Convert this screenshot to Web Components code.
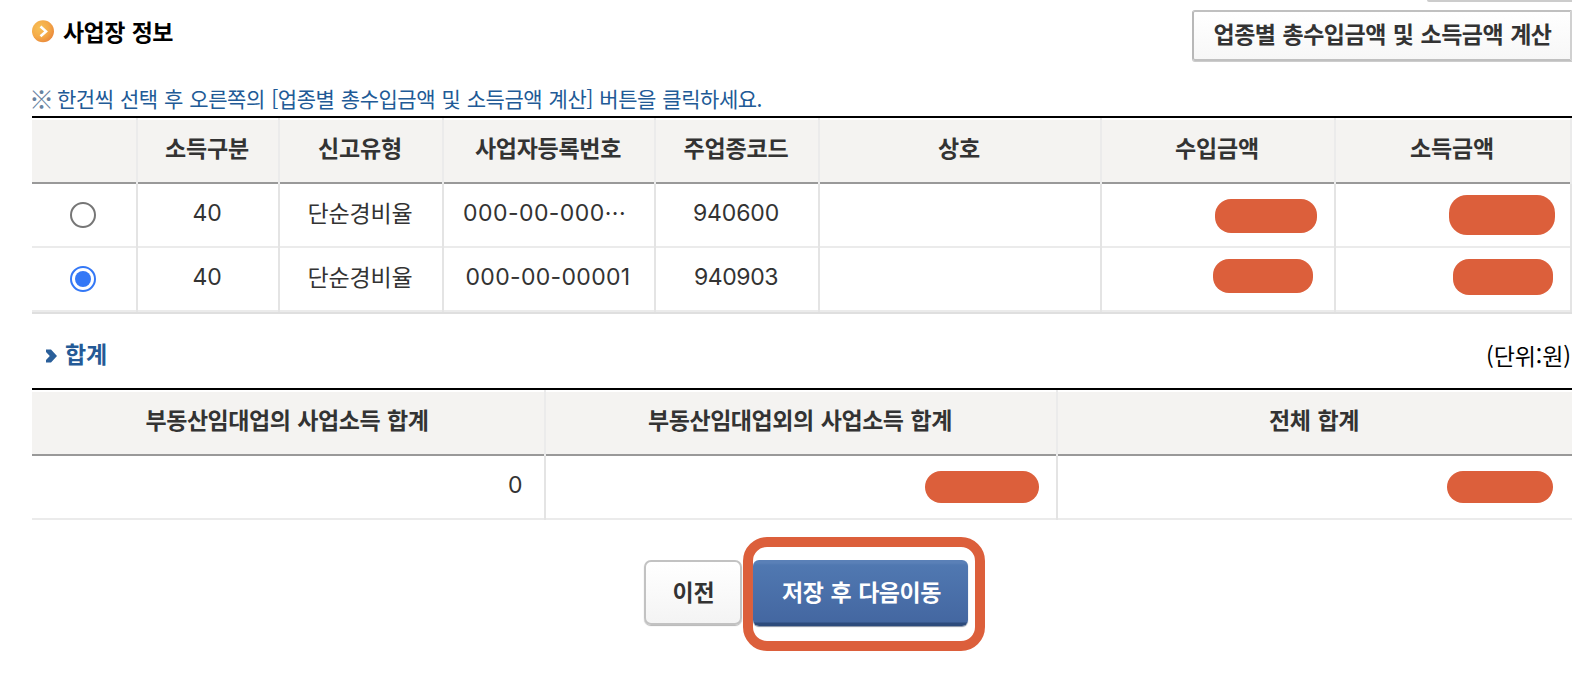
<!DOCTYPE html>
<html lang="ko">
<head>
<meta charset="utf-8">
<title>사업장 정보</title>
<style>
  body {
    margin: 0;
    height: 674px;
    overflow: hidden;
    background: #fff;
    color: #333;
    font-family: "Noto Sans CJK KR", sans-serif;
    font-size: 23px;
    line-height: 32px;
    word-spacing: 1px;
  }
</style>
</head>
<body>
<business-page></business-page>

<script>
/**
 * Text set to a fixed measure, the letters are spread or tightened to fill it
 *
 * <fit-text width="83">소득구분</fit-text>
 */
customElements.define(
  'fit-text',
  class extends HTMLElement {
    constructor() {
      super();
      this.attachShadow({ mode: 'open' }).innerHTML = `
      <style>
        :host {
          display: inline-block;
          white-space: nowrap;
        }

        :host([digits]) {
          padding-top: 2px;
          font-family: Inter, "Noto Sans CJK KR", sans-serif;
        }
      </style>
      <span><slot></slot></span>
    `;
    }

    connectedCallback() {
      const width = Number(this.getAttribute('width'));
      const span = this.shadowRoot.querySelector('span');
      const natural = span.getBoundingClientRect().width;
      const spacing = (width - natural) / this.textContent.length;

      span.style.letterSpacing = spacing + 'px';
      this.style.width = width + 'px';
    }
  }
);

customElements.define(
  'section-title',
  class extends HTMLElement {
    constructor() {
      super();
      this.attachShadow({ mode: 'open' }).innerHTML = `
      <style>
        :host {
          display: flex;
          align-items: flex-start;
          color: #000;
          font-weight: 700;
        }

        svg {
          display: block;
          flex: none;
          margin: 20px 9px 0 0;
        }

        .title {
          padding-top: 15px;
        }

        .chevron {
          display: none;
        }

        :host([sub]) {
          color: #245a96;
        }

        :host([sub]) .bullet {
          display: none;
        }

        :host([sub]) .chevron {
          display: block;
          margin: 35px 7px 0 14px;
        }

        :host([sub]) .title {
          padding-top: 23px;
        }
      </style>
      <svg class="bullet" width="22" height="23" viewBox="0 0 22 23">
        <defs>
          <radialGradient id="orb" cx="35%" cy="35%" r="70%">
            <stop offset="0" stop-color="#f7c056"/>
            <stop offset=".6" stop-color="#f4aa48"/>
            <stop offset="1" stop-color="#ea8a3c"/>
          </radialGradient>
        </defs>
        <circle cx="11" cy="11.3" r="11" fill="url(#orb)"/>
        <path d="M8.500 6.500l5.500 4.900-5.500 4.900" fill="none" stroke="#fff" stroke-width="2.600"/>
      </svg>
      <svg class="chevron" width="12" height="14" viewBox="0 0 12 14">
        <path d="M0 .5h5L11 7l-6 6.500H0v-2.500L3.800 7 0 3z" fill="#2a5f9a"/>
      </svg>
      <div class="title"><slot></slot></div>
    `;
    }
  }
);

customElements.define(
  'form-button',
  class extends HTMLElement {
    constructor() {
      super();
      this.attachShadow({ mode: 'open' }).innerHTML = `
      <style>
        :host {
          display: block;
          flex: none;
        }

        button {
          display: flex;
          justify-content: center;
          box-sizing: border-box;
          width: 98px;
          height: 65px;
          margin: 0;
          padding: 13px 0 0 1px;
          border: 2px solid #c2c2c2;
          border-radius: 7px;
          background: linear-gradient(#fff, #f4f4f4);
          box-shadow: 0 1px 1px #b5b5b5;
          color: #333;
          font: inherit;
          font-weight: 700;
          word-spacing: inherit;
        }

        :host([primary]) button {
          width: 215px;
          height: 66px;
          padding: 15px 0 0 2px;
          border: 0;
          border-radius: 6px;
          background: linear-gradient(#5a80b7, #5a80b7 3px, #5078b1 5px, #4467a1 62px, #2d4b7c 63px);
          box-shadow: 0 1px 1px #8792a5;
          color: #fff;
        }

        :host([wide]) button {
          width: 380px;
          height: 51px;
          padding-top: 5px;
          border-radius: 3px 0 0 3px;
          border-color: #c0c0c0 #d0d0d0 #c0c0c0 #b8b8b8;
          background: linear-gradient(#fff, #f7f7f7);
          box-shadow: 0 1px 0 #ccc;
        }
      </style>
      <button type="button"><slot></slot></button>
    `;
    }
  }
);

/** Opaque mark laid over a private amount */
customElements.define(
  'amount-mask',
  class extends HTMLElement {
    constructor() {
      super();
      this.attachShadow({ mode: 'open' }).innerHTML = `
      <style>
        :host {
          display: block;
          width: 100px;
          height: 34px;
          border-radius: 16px;
          background: #dc5f3b;
        }
      </style>
    `;
    }
  }
);

customElements.define(
  'row-radio',
  class extends HTMLElement {
    constructor() {
      super();
      this.attachShadow({ mode: 'open' }).innerHTML = `
      <style>
        :host {
          display: flex;
          box-sizing: border-box;
          width: 26px;
          height: 26px;
          padding: 3px;
          border: 2px solid #767676;
          border-radius: 50%;
          margin-top: 6px;
        }

        :host([checked]) {
          border-color: #3478f6;
        }

        :host([checked])::before {
          content: "";
          flex: 1;
          border-radius: 50%;
          background: #3478f6;
        }
      </style>
    `;
    }
  }
);

customElements.define(
  'data-grid',
  class extends HTMLElement {
    constructor() {
      super();
      this.attachShadow({ mode: 'open' }).innerHTML = `
      <style>
        :host {
          display: grid;
          border-top: 2px solid #000;
        }

        :host([closed]) {
          border-bottom: 2px solid #dfdfdf;
        }
      </style>
      <slot></slot>
    `;
    }

    connectedCallback() {
      this.style.gridTemplateColumns = this.getAttribute('columns');
    }
  }
);

customElements.define(
  'grid-cell',
  class extends HTMLElement {
    constructor() {
      super();
      this.attachShadow({ mode: 'open' }).innerHTML = `
      <style>
        :host {
          display: block;
          box-sizing: border-box;
          height: 64px;
          border-right: 2px solid #e4e4e4;
        }

        :host([last]) {
          border-right: 0;
        }

        .cell {
          display: flex;
          align-items: center;
          justify-content: center;
          box-sizing: border-box;
          height: 100%;
          padding: 0 2px 6px 0;
          border-bottom: 2px solid #ebebeb;
        }

        :host([head]) {
          height: 66px;
          padding-top: 2px;
          border-right-color: #ebebeb;
          font-weight: 700;
        }

        :host([head]) .cell {
          padding-bottom: 8px;
          border-bottom-color: #999;
          background: #f4f3f1;
        }

        :host([amount]) .cell {
          align-items: flex-start;
          justify-content: flex-end;
          padding: 0;
        }
      </style>
      <div class="cell"><slot></slot></div>
    `;
    }
  }
);

customElements.define(
  'business-page',
  class extends HTMLElement {
    constructor() {
      super();
      this.attachShadow({ mode: 'open' }).innerHTML = `
      ${this.getTemplateCss()}
      ${this.getTemplateHtml()}
    `;
    }

    getTemplateHtml() {
      return `
      <header>
        <section-title><fit-text width="110">사업장 정보</fit-text></section-title>
        <div class="tools">
          <div class="tools__above"></div>
          <form-button wide><fit-text width="338">업종별 총수입금액 및 소득금액 계산</fit-text></form-button>
        </div>
      </header>
      <p><span class="mark">※</span><fit-text width="705">한건씩 선택 후 오른쪽의 [업종별 총수입금액 및 소득금액 계산] 버튼을 클릭하세요.</fit-text></p>

      <data-grid closed columns="106px 142px 164px 212px 164px 282px 234px 236px">
        <grid-cell head></grid-cell>
        <grid-cell head><fit-text width="84">소득구분</fit-text></grid-cell>
        <grid-cell head><fit-text width="84">신고유형</fit-text></grid-cell>
        <grid-cell head><fit-text width="146">사업자등록번호</fit-text></grid-cell>
        <grid-cell head><fit-text width="105">주업종코드</fit-text></grid-cell>
        <grid-cell head><fit-text width="42">상호</fit-text></grid-cell>
        <grid-cell head><fit-text width="84">수입금액</fit-text></grid-cell>
        <grid-cell head><fit-text width="84">소득금액</fit-text></grid-cell>

        <grid-cell><row-radio></row-radio></grid-cell>
        <grid-cell><fit-text digits width="29">40</fit-text></grid-cell>
        <grid-cell><fit-text width="105">단순경비율</fit-text></grid-cell>
        <grid-cell><fit-text digits width="163" style="margin-right: 7px">000-00-000···</fit-text></grid-cell>
        <grid-cell><fit-text digits width="86">940600</fit-text></grid-cell>
        <grid-cell></grid-cell>
        <grid-cell amount><amount-mask style="width: 102px; margin: 15px 17px 0 0"></amount-mask></grid-cell>
        <grid-cell amount><amount-mask style="width: 106px; height: 40px; border-radius: 18px; margin: 11px 15px 0 0"></amount-mask></grid-cell>

        <grid-cell><row-radio checked></row-radio></grid-cell>
        <grid-cell><fit-text digits width="29">40</fit-text></grid-cell>
        <grid-cell><fit-text width="105">단순경비율</fit-text></grid-cell>
        <grid-cell><fit-text digits width="165">000-00-00001</fit-text></grid-cell>
        <grid-cell><fit-text digits width="84">940903</fit-text></grid-cell>
        <grid-cell></grid-cell>
        <grid-cell amount><amount-mask style="margin: 11px 21px 0 0"></amount-mask></grid-cell>
        <grid-cell amount><amount-mask style="height: 36px; margin: 11px 17px 0 0"></amount-mask></grid-cell>
      </data-grid>

      <div class="sum">
        <section-title sub><fit-text width="42">합계</fit-text></section-title>
        <fit-text class="unit" width="85">(단위:원)</fit-text>
      </div>

      <data-grid columns="514px 512px 514px">
        <grid-cell head><fit-text width="283">부동산임대업의 사업소득 합계</fit-text></grid-cell>
        <grid-cell head><fit-text width="304">부동산임대업외의 사업소득 합계</fit-text></grid-cell>
        <grid-cell head last><fit-text width="90">전체 합계</fit-text></grid-cell>

        <grid-cell amount><fit-text class="zero" digits width="15">0</fit-text></grid-cell>
        <grid-cell amount><amount-mask style="width: 114px; height: 32px; margin: 15px 17px 0 0"></amount-mask></grid-cell>
        <grid-cell amount last><amount-mask style="width: 106px; height: 32px; margin: 15px 19px 0 0"></amount-mask></grid-cell>
      </data-grid>

      <footer>
        <form-button><fit-text width="42">이전</fit-text></form-button>
        <div class="focus">
          <form-button primary><fit-text width="159">저장 후 다음이동</fit-text></form-button>
        </div>
      </footer>
    `;
    }

    getTemplateCss() {
      return `
      <style>
        :host {
          display: block;
          width: 1540px;
          margin-left: 32px;
        }

        header {
          display: flex;
          justify-content: space-between;
          height: 84px;
        }

        .tools {
          display: flex;
          flex-direction: column;
          align-items: flex-end;
          gap: 8px;
        }

        .tools__above {
          width: 145px;
          height: 2px;
          border-radius: 0 0 0 3px;
          background: #ccc;
        }

        p {
          display: flex;
          align-items: flex-start;
          height: 32px;
          margin: 0;
          color: #215a96;
          font-size: 21px;
          line-height: 29px;
        }

        .mark {
          width: 25px;
          color: #68829f;
          font-size: 25px;
          text-indent: -3px;
        }

        .sum {
          display: flex;
          align-items: flex-start;
          justify-content: space-between;
          height: 74px;
        }

        .unit {
          margin: 25px 1px 0 0;
          color: #000;
        }

        .zero {
          margin: 11px 21px 0 0;
        }

        footer {
          display: flex;
          align-items: flex-start;
          padding: 17px 0 0 612px;
        }

        footer > form-button {
          margin: 23px 1px 0 0;
        }

        .focus {
          box-sizing: border-box;
          width: 242px;
          height: 114px;
          padding-top: 13px;
          border: 10px solid #dc5f3b;
          border-radius: 24px;
        }
      </style>
    `;
    }
  }
);
</script>
</body>
</html>
